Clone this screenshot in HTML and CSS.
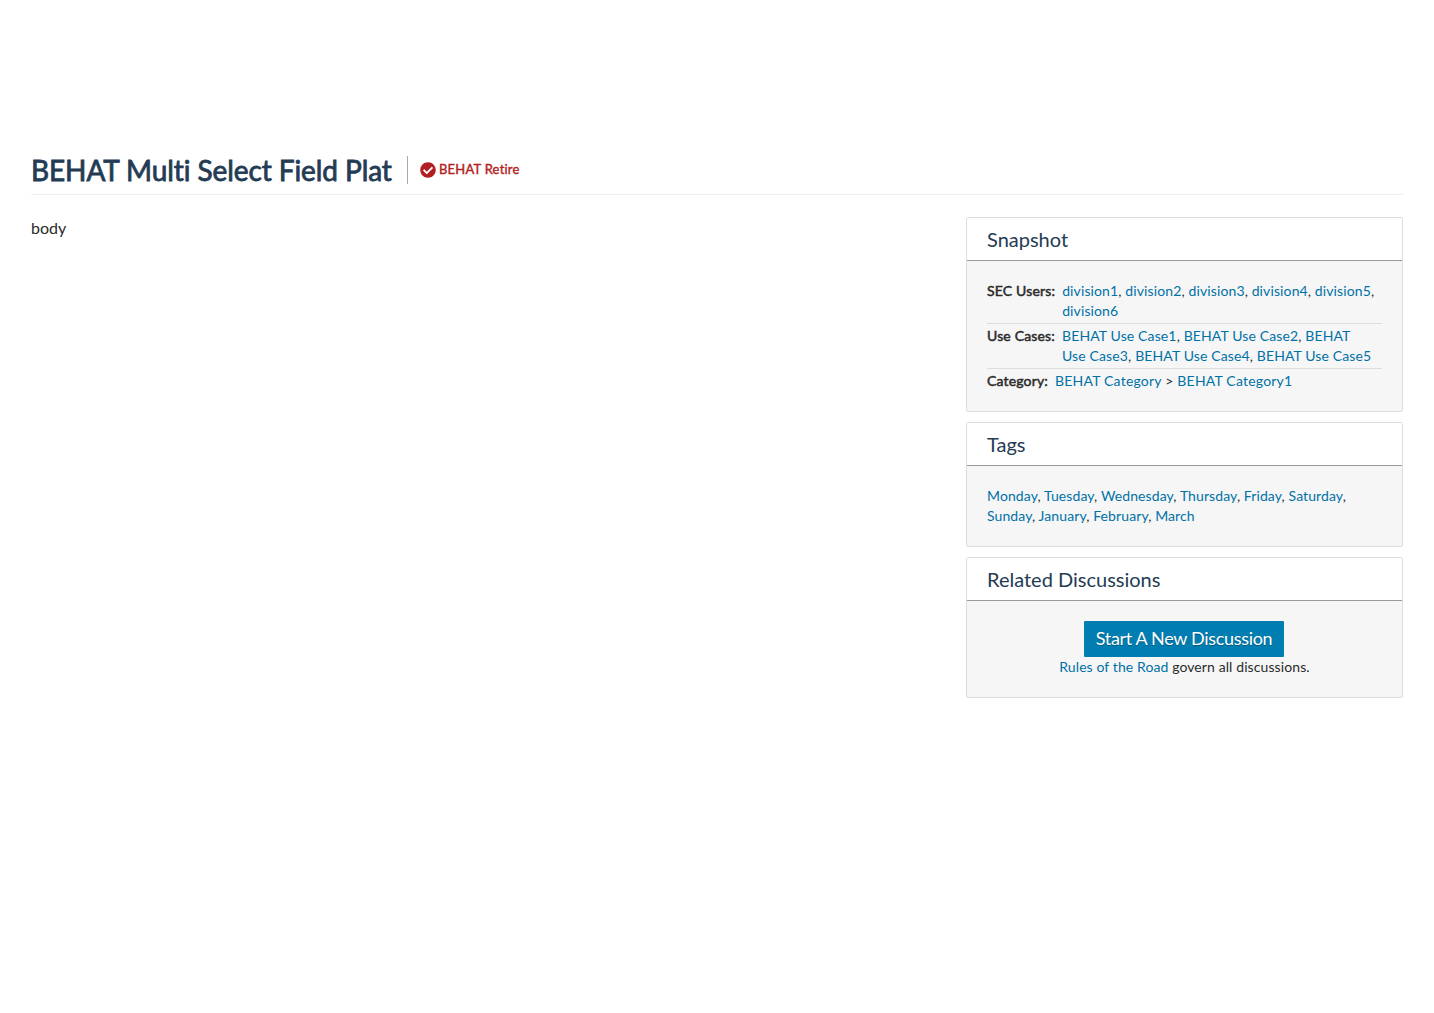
FILE: index.html
```html
<!DOCTYPE html>
<html lang="en">
<head>
<meta charset="utf-8">
<title>BEHAT Multi Select Field Plat</title>
<link rel="stylesheet" href="styles.css">
</head>
<body>
<header class="page-header">
  <h1>BEHAT Multi Select Field Plat</h1>
  <div class="status">
    <svg class="status-icon" viewBox="0 0 512 512" aria-hidden="true"><path fill="currentColor" d="M504 256c0 137-111 248-248 248S8 393 8 256 119 8 256 8s248 111 248 248zM227.300 387.300l184-184c6.200-6.200 6.200-16.400 0-22.600l-22.600-22.600c-6.200-6.200-16.400-6.200-22.600 0L216 308.100l-70.100-70.100c-6.200-6.200-16.400-6.200-22.600 0l-22.600 22.600c-6.200 6.200-6.200 16.400 0 22.600l104 104c6.200 6.300 16.400 6.300 22.600.1z"/></svg>
    <span>BEHAT Retire</span>
  </div>
</header>
<div class="columns">
  <main>body</main>
  <aside>
    <section class="panel">
      <h2>Snapshot</h2>
      <div class="panel-body">
        <div class="field"><b class="label">SEC Users:</b><div><a>division1</a>, <a>division2</a>, <a>division3</a>, <a>division4</a>, <a>division5</a>, <a>division6</a></div></div>
        <div class="field use-cases"><b class="label">Use Cases:</b><div><a>BEHAT Use Case1</a>, <a>BEHAT Use Case2</a>, <a>BEHAT Use Case3</a>, <a>BEHAT Use Case4</a>, <a>BEHAT Use Case5</a></div></div>
        <div class="field category"><b class="label">Category:</b><div><a>BEHAT Category</a> &gt; <a>BEHAT Category1</a></div></div>
      </div>
    </section>
    <section class="panel">
      <h2>Tags</h2>
      <div class="panel-body"><a>Monday</a>, <a>Tuesday</a>, <a>Wednesday</a>, <a>Thursday</a>, <a>Friday</a>, <a>Saturday</a>, <a>Sunday</a>, <a>January</a>, <a>February</a>, <a>March</a></div>
    </section>
    <section class="panel">
      <h2>Related Discussions</h2>
      <div class="panel-body discussions">
        <button class="start">Start A New Discussion</button>
        <div><a>Rules of the Road</a> govern all discussions.</div>
      </div>
    </section>
  </aside>
</div>
</body>
</html>
```
FILE: styles.css
```css
* { box-sizing: border-box; }
body { margin: 0; padding: 145px 31px 0; font: 14px/20px Lato, sans-serif; font-variant-ligatures: none; color: #2b2b2b; background: #fff; }
a { color: #0071a6; }
.page-header { display: flex; height: 50px; padding-top: 10px; border-bottom: 1px solid #eee; }
h1 { margin: 0; font-size: 28px; line-height: 30px; font-weight: 400; letter-spacing: -0.08px; -webkit-text-stroke: 0.8px currentColor; color: #243b54; white-space: nowrap; width: 361px; }
.status { display: flex; align-items: center; gap: 3px; height: 28px; margin: 1px 0 0 15px; padding-left: 12px; border-left: 1px solid #aaa; color: #b31e22; font-size: 13px; letter-spacing: 0.22px; -webkit-text-stroke: 0.4px currentColor; }
.status span { padding-bottom: 2px; }
.status-icon { width: 16px; height: 16px; stroke: none; }
.columns { display: flex; justify-content: space-between; padding-top: 22px; }
main { font-size: 16px; line-height: 22px; }
aside { display: flex; flex-direction: column; gap: 10px; width: 437px; letter-spacing: 0.1px; }
.panel { border: 1px solid #ddd; border-radius: 2px; background: #f6f6f6; }
h2 { margin: 0; height: 43px; padding: 0 20px; font-size: 20px; line-height: 42px; font-weight: 400; letter-spacing: 0; color: #243b54; background: #fff; border-bottom: 1px solid #999; }
.panel-body { padding: 20px; }
.field { display: flex; gap: 7px; padding-bottom: 2px; margin-bottom: 2px; border-bottom: 1px solid #ddd; letter-spacing: 0.12px; }
.field:last-child { border: 0; padding: 0; margin: 0; }
.use-cases { padding-right: 10px; letter-spacing: 0.13px; }
.category { letter-spacing: 0.21px; }
.label { font-weight: 400; letter-spacing: 0.17px; -webkit-text-stroke: 0.5px currentColor; white-space: nowrap; }
.discussions { display: flex; flex-direction: column; align-items: center; }
.start { width: 200px; height: 36px; margin-right: 1px; padding: 0 0 2px; border: 0; border-radius: 1px; background: #007eb2; color: #fff; font: 18px/34px Lato, sans-serif; letter-spacing: -0.32px; text-shadow: 0 1px 1px rgba(0, 0, 0, 0.3); }
```
